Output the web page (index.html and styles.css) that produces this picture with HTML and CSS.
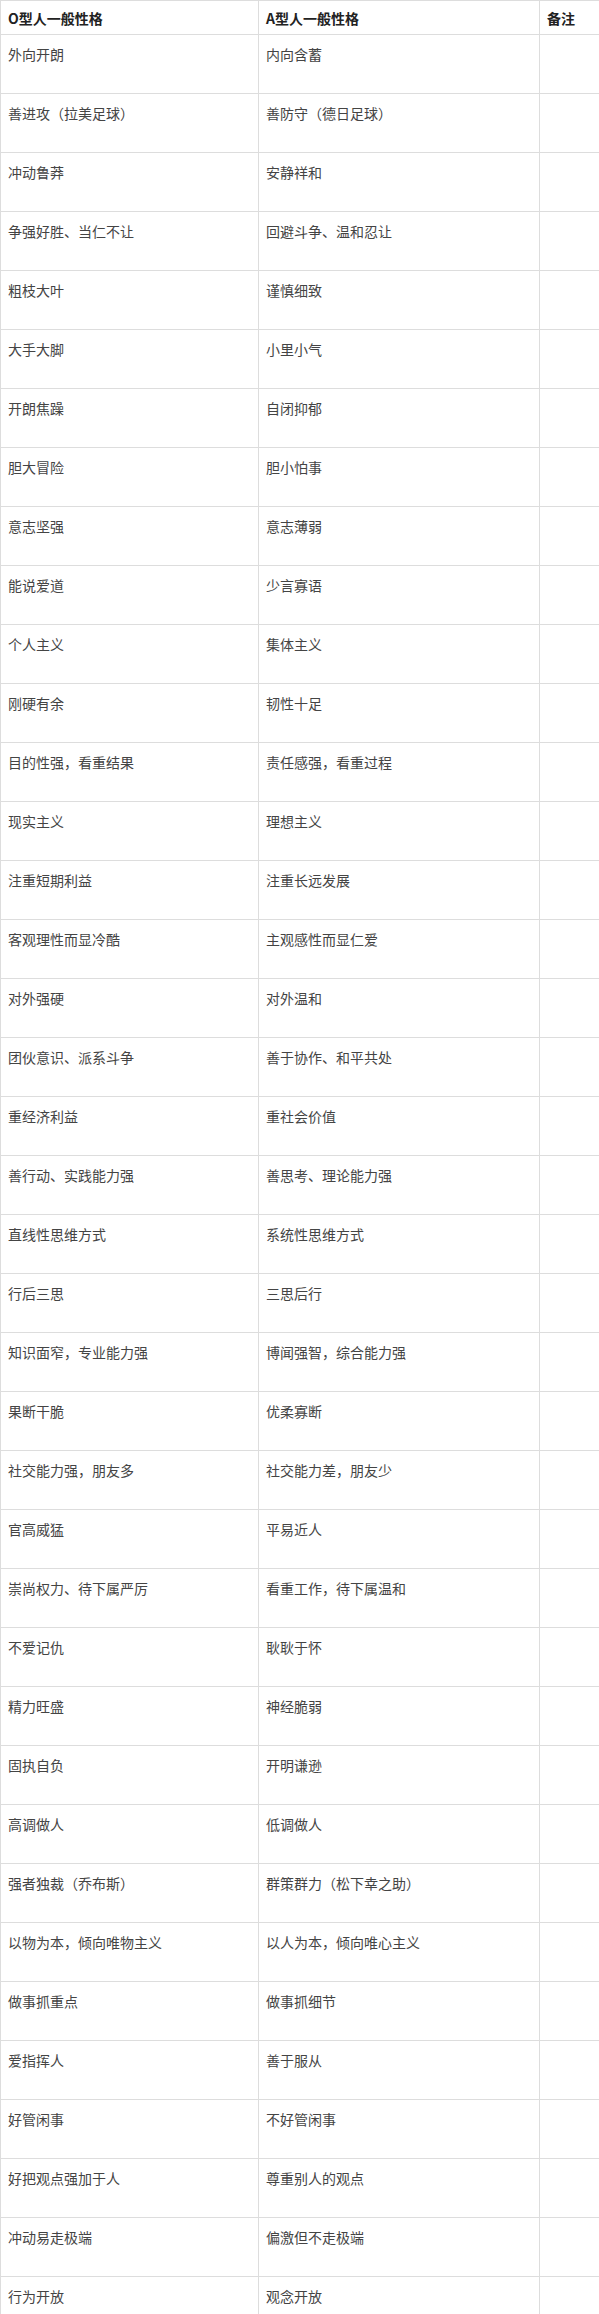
FILE: index.html
```html
<!DOCTYPE html>
<html lang="zh-CN">
<head>
<meta charset="utf-8">
<title>O型人与A型人一般性格</title>
<link rel="stylesheet" href="styles.css">
</head>
<body>
<table class="traits">
  <colgroup>
    <col class="col-o">
    <col class="col-a">
    <col class="col-note">
  </colgroup>
  <thead>
    <tr class="head-row"><th>O型人一般性格</th><th>A型人一般性格</th><th class="note">备注</th></tr>
  </thead>
  <tbody>
    <tr><td>外向开朗</td><td>内向含蓄</td><td class="note"></td></tr>
    <tr><td>善进攻（拉美足球）</td><td>善防守（德日足球）</td><td class="note"></td></tr>
    <tr><td>冲动鲁莽</td><td>安静祥和</td><td class="note"></td></tr>
    <tr><td>争强好胜、当仁不让</td><td>回避斗争、温和忍让</td><td class="note"></td></tr>
    <tr><td>粗枝大叶</td><td>谨慎细致</td><td class="note"></td></tr>
    <tr><td>大手大脚</td><td>小里小气</td><td class="note"></td></tr>
    <tr><td>开朗焦躁</td><td>自闭抑郁</td><td class="note"></td></tr>
    <tr><td>胆大冒险</td><td>胆小怕事</td><td class="note"></td></tr>
    <tr><td>意志坚强</td><td>意志薄弱</td><td class="note"></td></tr>
    <tr><td>能说爱道</td><td>少言寡语</td><td class="note"></td></tr>
    <tr><td>个人主义</td><td>集体主义</td><td class="note"></td></tr>
    <tr><td>刚硬有余</td><td>韧性十足</td><td class="note"></td></tr>
    <tr><td>目的性强，看重结果</td><td>责任感强，看重过程</td><td class="note"></td></tr>
    <tr><td>现实主义</td><td>理想主义</td><td class="note"></td></tr>
    <tr><td>注重短期利益</td><td>注重长远发展</td><td class="note"></td></tr>
    <tr><td>客观理性而显冷酷</td><td>主观感性而显仁爱</td><td class="note"></td></tr>
    <tr><td>对外强硬</td><td>对外温和</td><td class="note"></td></tr>
    <tr><td>团伙意识、派系斗争</td><td>善于协作、和平共处</td><td class="note"></td></tr>
    <tr><td>重经济利益</td><td>重社会价值</td><td class="note"></td></tr>
    <tr><td>善行动、实践能力强</td><td>善思考、理论能力强</td><td class="note"></td></tr>
    <tr><td>直线性思维方式</td><td>系统性思维方式</td><td class="note"></td></tr>
    <tr><td>行后三思</td><td>三思后行</td><td class="note"></td></tr>
    <tr><td>知识面窄，专业能力强</td><td>博闻强智，综合能力强</td><td class="note"></td></tr>
    <tr><td>果断干脆</td><td>优柔寡断</td><td class="note"></td></tr>
    <tr><td>社交能力强，朋友多</td><td>社交能力差，朋友少</td><td class="note"></td></tr>
    <tr><td>官高威猛</td><td>平易近人</td><td class="note"></td></tr>
    <tr><td>崇尚权力、待下属严厉</td><td>看重工作，待下属温和</td><td class="note"></td></tr>
    <tr><td>不爱记仇</td><td>耿耿于怀</td><td class="note"></td></tr>
    <tr><td>精力旺盛</td><td>神经脆弱</td><td class="note"></td></tr>
    <tr><td>固执自负</td><td>开明谦逊</td><td class="note"></td></tr>
    <tr><td>高调做人</td><td>低调做人</td><td class="note"></td></tr>
    <tr><td>强者独裁（乔布斯）</td><td>群策群力（松下幸之助）</td><td class="note"></td></tr>
    <tr><td>以物为本，倾向唯物主义</td><td>以人为本，倾向唯心主义</td><td class="note"></td></tr>
    <tr><td>做事抓重点</td><td>做事抓细节</td><td class="note"></td></tr>
    <tr><td>爱指挥人</td><td>善于服从</td><td class="note"></td></tr>
    <tr><td>好管闲事</td><td>不好管闲事</td><td class="note"></td></tr>
    <tr><td>好把观点强加于人</td><td>尊重别人的观点</td><td class="note"></td></tr>
    <tr><td>冲动易走极端</td><td>偏激但不走极端</td><td class="note"></td></tr>
    <tr><td>行为开放</td><td>观念开放</td><td class="note"></td></tr>
  </tbody>
</table>
</body>
</html>
```
FILE: styles.css
```css
html, body {
  margin: 0;
  padding: 0;
  background: #ffffff;
}

body {
  font-family: "Noto Sans CJK SC", "Liberation Sans", sans-serif;
  font-size: 14px;
  color: #444444;
}

.traits {
  border-collapse: collapse;
  table-layout: fixed;
  width: 600px;
}

.col-o { width: 258px; }
.col-a { width: 281px; }
.col-note { width: 61px; }

.traits th,
.traits td {
  border: 1px solid #dddddd;
  text-align: left;
  padding: 0 7px;
  line-height: 22px;
}

.traits th {
  font-weight: bold;
  color: #222222;
  vertical-align: middle;
  height: 34px;
  box-sizing: border-box;
}

.traits td {
  vertical-align: top;
  padding-top: 8px;
  height: 59px;
  box-sizing: border-box;
}

.traits .note {
  border-right: none;
}
```
